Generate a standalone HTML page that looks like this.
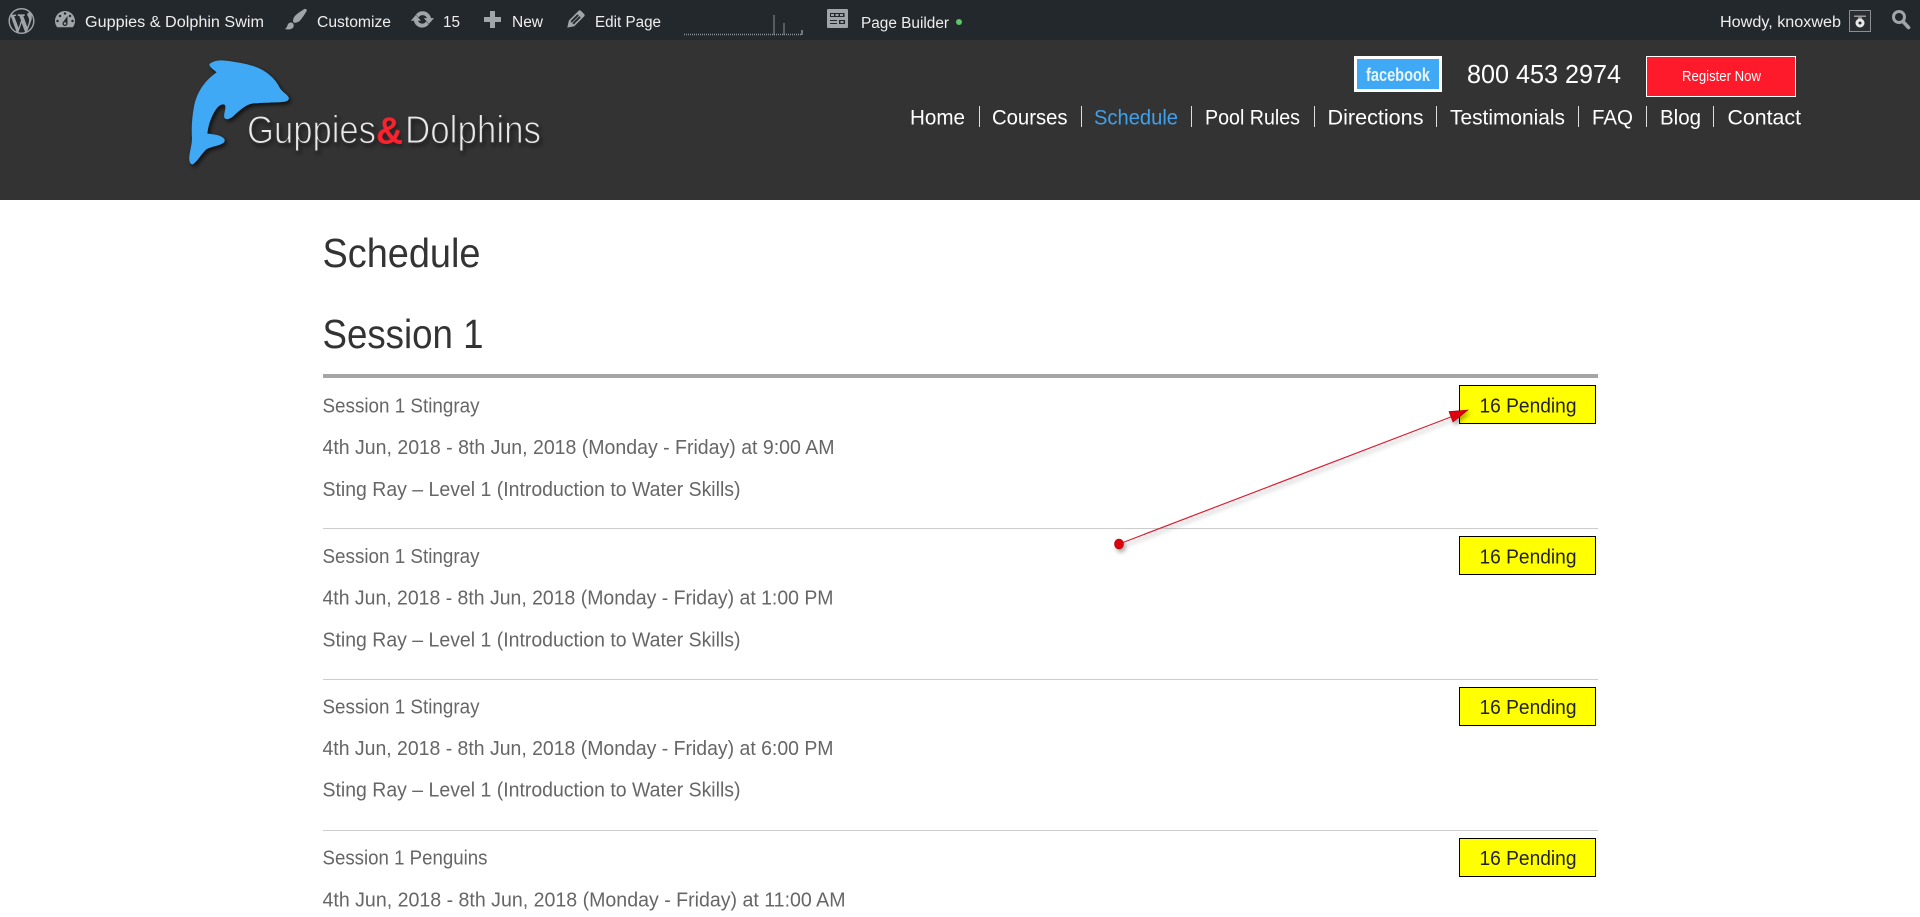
<!DOCTYPE html>
<html lang="en">
<head>
<meta charset="utf-8">
<title>Schedule - Guppies &amp; Dolphins</title>
<style>
html,body{margin:0;padding:0;width:1920px;height:917px;overflow:hidden;background:#fff}
svg{display:block;font-family:"Liberation Sans",sans-serif}
.a{font-size:15.5px;fill:#eee}
.n{font-size:21px;fill:#fff}
.r{font-size:20px;fill:#666}
.p{font-size:20.5px;fill:#222}
.h{font-size:41px;fill:#333}
</style>
</head>
<body>
<svg width="1920" height="917" viewBox="0 0 1920 917" xmlns="http://www.w3.org/2000/svg">
<defs>
<filter id="s" x="-30%" y="-30%" width="170%" height="170%"><feDropShadow dx="6" dy="7" stdDeviation="6" flood-color="#000" flood-opacity=".75"/></filter>
<filter id="s2" x="-10%" y="-30%" width="120%" height="170%"><feDropShadow dx="2" dy="3" stdDeviation="2" flood-color="#000" flood-opacity=".35"/></filter>
</defs>

<!-- admin bar -->
<rect width="1920" height="40" fill="#23282d"/>
<g fill="#a0a5aa">
<path transform="translate(8.5 8) scale(1.3)" fill-rule="evenodd" d="M20 10c0-5.51-4.49-10-10-10C4.48 0 0 4.49 0 10c0 5.52 4.48 10 10 10 5.51 0 10-4.48 10-10zM7.78 15.37L4.37 6.22c.55-.02 1.17-.08 1.17-.08.5-.06.44-1.13-.06-1.11 0 0-1.45.11-2.37.11-.18 0-.37 0-.58-.01C4.12 2.69 6.87 1.11 10 1.11c2.33 0 4.45.87 6.05 2.34-.68-.11-1.65.39-1.65 1.58 0 .74.45 1.36.9 2.1.35.61.55 1.36.55 2.46 0 1.49-1.4 5-1.4 5l-3.03-8.37c.54-.02.82-.17.82-.17.5-.05.44-1.25-.06-1.22 0 0-1.44.12-2.38.12-.87 0-2.33-.12-2.33-.12-.5-.03-.56 1.2-.06 1.22l.92.08 1.26 3.41zM17.41 10c.24-.64.74-1.87.43-4.25.7 1.29 1.05 2.71 1.05 4.25 0 3.29-1.73 6.24-4.4 7.78.97-2.59 1.94-5.2 2.92-7.78zM6.1 18.09C3.12 16.65 1.11 13.53 1.11 10c0-1.3.23-2.48.72-3.59C3.25 10.3 4.67 14.2 6.1 18.09zm4.03-6.63l2.58 6.98c-.86.29-1.76.45-2.71.45-.79 0-1.57-.11-2.29-.33.81-2.38 1.62-4.74 2.42-7.1z"/>
<path transform="translate(52.5 7.25) scale(1.25)" fill-rule="evenodd" d="M3.76 16h12.48c1.1-1.37 1.76-3.11 1.76-5 0-4.42-3.58-8-8-8s-8 3.58-8 8c0 1.89.66 3.63 1.76 5zM10 4c.55 0 1 .45 1 1s-.45 1-1 1-1-.45-1-1 .45-1 1-1zM6 6c.55 0 1 .45 1 1s-.45 1-1 1-1-.45-1-1 .45-1 1-1zm8 0c.55 0 1 .45 1 1s-.45 1-1 1-1-.45-1-1 .45-1 1-1zm-5.37 5.55L12 7v6c0 1.1-.9 2-2 2s-2-.9-2-2c0-.57.24-1.08.63-1.45zM4 10c.55 0 1 .45 1 1s-.45 1-1 1-1-.45-1-1 .45-1 1-1zm12 0c.55 0 1 .45 1 1s-.45 1-1 1-1-.45-1-1 .45-1 1-1zm-5 3c0-.55-.45-1-1-1s-1 .45-1 1 .45 1 1 1 1-.45 1-1z"/>
<path transform="translate(283.2 6.4) scale(1.28)" d="M18.33 3.57s.27-.8-.31-1.36c-.53-.52-1.22-.24-1.22-.24-.61.3-5.76 3.47-7.67 5.57-.86.96-2.06 3.79-1.09 4.82.92.98 3.96-.17 4.79-1 2.06-2.06 5.21-7.17 5.5-7.79zM1.4 17.65c2.37-1.56 1.46-3.41 3.23-4.64.93-.65 2.22-.62 3.08.29.63.67.8 2.57-.16 3.46-1.57 1.45-4 1.55-6.15.89z"/>
<path transform="translate(411 8) scale(1.14)" stroke="#a0a5aa" stroke-width=".9" d="M10.2 3.28c3.53 0 6.43 2.61 6.92 6h2.08l-3.5 4-3.5-4h2.32c-.45-1.97-2.21-3.45-4.32-3.45-1.45 0-2.73.71-3.54 1.78L4.95 5.66C6.23 4.2 8.11 3.28 10.2 3.28zm-.4 13.44c-3.52 0-6.43-2.61-6.92-6H.8l3.5-4c1.17 1.33 2.33 2.67 3.5 4H5.48c.45 1.97 2.21 3.45 4.32 3.45 1.45 0 2.73-.71 3.54-1.78l1.71 1.95c-1.28 1.46-3.15 2.38-5.25 2.38z"/>
<path d="M490 11h5v6h6v5h-6v6h-5v-6h-6v-5h6z"/>
<path transform="translate(563.5 6.5) scale(1.25)" fill-rule="evenodd" d="M13.89 3.39l2.71 2.72c.46.46.42 1.24.03 1.64l-8.01 8.02-5.56 1.16 1.16-5.58s7.6-7.63 7.99-8.03c.39-.39 1.22-.39 1.68.07zm-2.73 2.79l-5.59 5.61 1.11 1.11 5.54-5.65zm-2.97 8.23l5.58-5.6-1.07-1.08-5.59 5.6z"/>
<!-- page builder icon -->
<path fill-rule="evenodd" d="M828 9h19a1 1 0 0 1 1 1v17a1 1 0 0 1-1 1h-19a1 1 0 0 1-1-1V10a1 1 0 0 1 1-1zM830 13v4h14.500v-4zM830 20v1h7v-1zm0 3v1h7v-1zm9-3v4h6v-4z"/>
<rect x="831" y="14" width="3" height="2"/><rect x="835.500" y="14" width="3" height="2"/><rect x="840" y="14" width="3" height="2"/>
<rect x="840.500" y="21" width="3" height="2"/>
</g>

<text class="a" x="85" y="27" textLength="179" lengthAdjust="spacingAndGlyphs">Guppies &amp; Dolphin Swim</text>
<text class="a" x="317" y="27" textLength="74" lengthAdjust="spacingAndGlyphs">Customize</text>
<text class="a" x="443" y="27" textLength="17" lengthAdjust="spacingAndGlyphs">15</text>
<text class="a" x="512" y="27" textLength="31" lengthAdjust="spacingAndGlyphs">New</text>
<text class="a" x="595" y="27" textLength="66" lengthAdjust="spacingAndGlyphs">Edit Page</text>
<text class="a" x="861" y="28" textLength="88" lengthAdjust="spacingAndGlyphs">Page Builder</text>
<text class="a" x="1720" y="27" textLength="121" lengthAdjust="spacingAndGlyphs">Howdy, knoxweb</text>

<!-- sparkline -->
<line x1="684" y1="34.5" x2="802" y2="34.5" stroke="#8a8f94" stroke-width="1.5" stroke-dasharray="1 1"/>
<g stroke="#8a8f94" stroke-width="1"><line x1="774" y1="15" x2="774" y2="35"/><line x1="784" y1="23" x2="784" y2="35"/><line x1="802" y1="30" x2="802" y2="35" stroke-width="1.5"/></g>
<circle cx="959" cy="22" r="3" fill="#5fc56a"/>

<!-- avatar -->
<rect x="1849.5" y="10.5" width="21" height="21" fill="#2b2f33" stroke="#8c8f92"/>
<rect x="1854" y="15.5" width="12" height="1.5" fill="#999"/>
<rect x="1858" y="17" width="4" height="2" fill="#888"/>
<circle cx="1860" cy="23" r="3" fill="none" stroke="#e8e8e8" stroke-width="3"/>

<!-- search -->
<g fill="none" stroke="#a0a5aa"><circle cx="1899" cy="17" r="5.5" stroke-width="3"/><line x1="1903" y1="21.5" x2="1908.500" y2="27.5" stroke-width="3.6" stroke-linecap="round"/></g>

<!-- header -->
<rect y="40" width="1920" height="160" fill="#333"/>

<!-- logo -->
<g transform="translate(170 45) scale(.33333)" filter="url(#s)">
<path fill="#3fa9f5" d="M118 58C125 50 145 44 165 47C190 50 225 55 255 65C290 78 315 100 330 130C338 142 352 148 356 158C358 166 350 170 335 171C310 173 275 172 245 176C225 180 205 200 188 215C180 222 168 226 163 218C160 205 170 190 165 180C158 175 148 180 140 190C125 210 114 240 112 266C125 268 140 268 152 274C162 278 167 285 162 292C150 302 125 304 110 312C95 325 82 350 68 358C60 358 57 348 58 335C60 315 66 300 66 280C64 250 66 215 72 185C80 145 100 110 140 82C132 74 120 68 118 58Z"/>
</g>
<g filter="url(#s2)">
<text x="247" y="143" font-size="38.5" fill="#e8e8e8" stroke="#333" stroke-width="1.1" textLength="129" lengthAdjust="spacingAndGlyphs">Guppies</text>
<text x="376" y="143.5" font-size="38" font-weight="700" fill="#f9202e" textLength="27" lengthAdjust="spacingAndGlyphs">&amp;</text>
<text x="405" y="143" font-size="38.5" fill="#e8e8e8" stroke="#333" stroke-width="1.1" textLength="136" lengthAdjust="spacingAndGlyphs">Dolphins</text>
</g>

<!-- facebook -->
<rect x="1355.5" y="57.5" width="85" height="33" fill="#3fa9f5" stroke="#fff" stroke-width="3"/>
<text x="1366" y="81" font-size="18.5" font-weight="700" fill="#e8f4fd" textLength="64" lengthAdjust="spacingAndGlyphs">facebook</text>

<!-- phone -->
<text x="1467" y="83" font-size="26" fill="#fff" textLength="154" lengthAdjust="spacingAndGlyphs">800 453 2974</text>

<!-- register -->
<rect x="1646.5" y="56.5" width="149" height="40" fill="#ff1a2b" stroke="#fff"/>
<text x="1682" y="81" font-size="15" fill="#fff" textLength="79" lengthAdjust="spacingAndGlyphs">Register Now</text>

<!-- nav -->
<text class="n" x="910" y="124.5" textLength="55" lengthAdjust="spacingAndGlyphs">Home</text>
<text class="n" x="992" y="124.5" textLength="75.5" lengthAdjust="spacingAndGlyphs">Courses</text>
<text class="n" x="1094" y="124.5" textLength="84" lengthAdjust="spacingAndGlyphs" style="fill:#3fa0ec">Schedule</text>
<text class="n" x="1205" y="124.5" textLength="95" lengthAdjust="spacingAndGlyphs">Pool Rules</text>
<text class="n" x="1327.5" y="124.5" textLength="96" lengthAdjust="spacingAndGlyphs">Directions</text>
<text class="n" x="1450" y="124.5" textLength="115" lengthAdjust="spacingAndGlyphs">Testimonials</text>
<text class="n" x="1592" y="124.5" textLength="41" lengthAdjust="spacingAndGlyphs">FAQ</text>
<text class="n" x="1660" y="124.5" textLength="41" lengthAdjust="spacingAndGlyphs">Blog</text>
<text class="n" x="1727.5" y="124.5" textLength="73.5" lengthAdjust="spacingAndGlyphs">Contact</text>
<g fill="#ddd">
<rect x="979" y="106" width="1" height="21"/><rect x="1081" y="106" width="1" height="21"/><rect x="1191" y="106" width="1" height="21"/><rect x="1314" y="106" width="1" height="21"/><rect x="1436" y="106" width="1" height="21"/><rect x="1578" y="106" width="1" height="21"/><rect x="1646" y="106" width="1" height="21"/><rect x="1713" y="106" width="1" height="21"/>
</g>

<!-- headings -->
<text class="h" x="322.5" y="267" textLength="158" lengthAdjust="spacingAndGlyphs">Schedule</text>
<text class="h" x="322.5" y="348" textLength="161" lengthAdjust="spacingAndGlyphs">Session 1</text>
<rect x="323" y="374" width="1275" height="4" fill="#a5a5a5"/>

<!-- row 1 -->
<text class="r" x="322.500" y="412.500" textLength="157" lengthAdjust="spacingAndGlyphs">Session 1 Stingray</text>
<text class="r" x="322.500" y="454" textLength="512" lengthAdjust="spacingAndGlyphs">4th Jun, 2018 - 8th Jun, 2018 (Monday - Friday) at 9:00 AM</text>
<text class="r" x="322.500" y="496" textLength="418" lengthAdjust="spacingAndGlyphs">Sting Ray – Level 1 (Introduction to Water Skills)</text>
<rect x="323" y="528" width="1275" height="1" fill="#ccc"/>
<rect x="1459.5" y="385.5" width="136" height="38" fill="#ff0" stroke="#000"/>
<text class="p" x="1479.5" y="412.500" textLength="97" lengthAdjust="spacingAndGlyphs">16 Pending</text>

<!-- row 2 -->
<text class="r" x="322.500" y="563" textLength="157" lengthAdjust="spacingAndGlyphs">Session 1 Stingray</text>
<text class="r" x="322.500" y="604.500" textLength="511" lengthAdjust="spacingAndGlyphs">4th Jun, 2018 - 8th Jun, 2018 (Monday - Friday) at 1:00 PM</text>
<text class="r" x="322.500" y="646.500" textLength="418" lengthAdjust="spacingAndGlyphs">Sting Ray – Level 1 (Introduction to Water Skills)</text>
<rect x="323" y="679" width="1275" height="1" fill="#ccc"/>
<rect x="1459.5" y="536.5" width="136" height="38" fill="#ff0" stroke="#000"/>
<text class="p" x="1479.5" y="563.500" textLength="97" lengthAdjust="spacingAndGlyphs">16 Pending</text>

<!-- row 3 -->
<text class="r" x="322.500" y="713.500" textLength="157" lengthAdjust="spacingAndGlyphs">Session 1 Stingray</text>
<text class="r" x="322.500" y="755" textLength="511" lengthAdjust="spacingAndGlyphs">4th Jun, 2018 - 8th Jun, 2018 (Monday - Friday) at 6:00 PM</text>
<text class="r" x="322.500" y="796.500" textLength="418" lengthAdjust="spacingAndGlyphs">Sting Ray – Level 1 (Introduction to Water Skills)</text>
<rect x="323" y="830" width="1275" height="1" fill="#ccc"/>
<rect x="1459.5" y="687.5" width="136" height="38" fill="#ff0" stroke="#000"/>
<text class="p" x="1479.5" y="714" textLength="97" lengthAdjust="spacingAndGlyphs">16 Pending</text>

<!-- row 4 -->
<text class="r" x="322.500" y="864.500" textLength="165" lengthAdjust="spacingAndGlyphs">Session 1 Penguins</text>
<text class="r" x="322.500" y="906.500" textLength="523" lengthAdjust="spacingAndGlyphs">4th Jun, 2018 - 8th Jun, 2018 (Monday - Friday) at 11:00 AM</text>
<rect x="1459.5" y="838.5" width="136" height="38" fill="#ff0" stroke="#000"/>
<text class="p" x="1479.5" y="865" textLength="97" lengthAdjust="spacingAndGlyphs">16 Pending</text>

<!-- arrow annotation -->
<g filter="url(#s2)">
<line x1="1119" y1="544" x2="1456" y2="415" stroke="#dc2035" stroke-width="1.2"/>
<path d="M1468 410L1449 411.5L1453 422Z" fill="#e00010" stroke="#900" stroke-width=".6"/>
<ellipse cx="1119" cy="544" rx="4.500" ry="5" fill="#e00010" stroke="#900" stroke-width=".6"/>
</g>
</svg>
</body>
</html>
